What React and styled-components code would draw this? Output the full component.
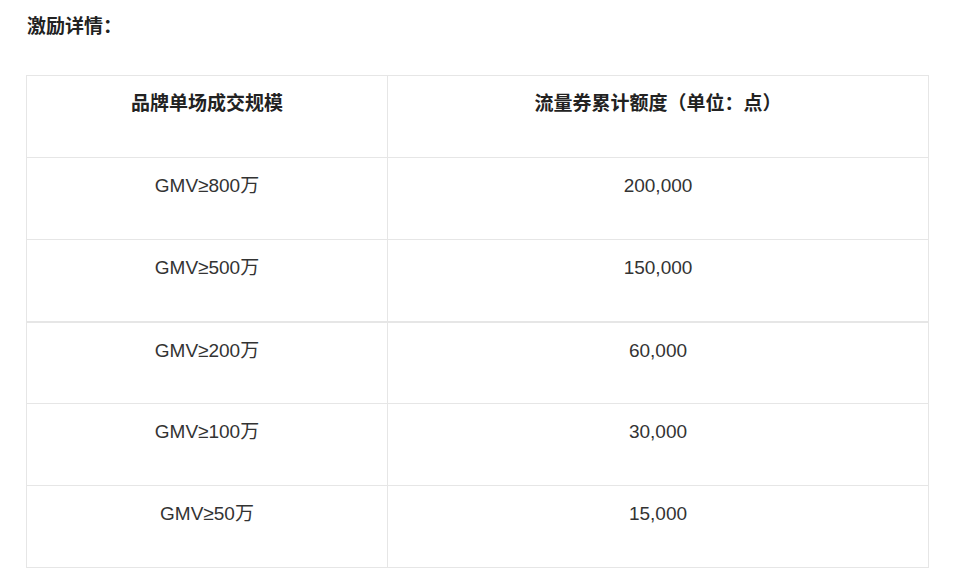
import React from 'react';
import styled, { createGlobalStyle } from 'styled-components';

const GlobalStyle = createGlobalStyle`
    html, body {
        margin: 0;
        padding: 0;
        background: #fff;
    }
    body {
        font-family: "Liberation Sans", Arial, "Noto Sans CJK SC", sans-serif;
        color: #333;
    }
`;

const Page = styled.div`
    padding: 15px 38px 0 26px;
`;

const Title = styled.div`
    font-size: 19px;
    line-height: 24px;
    font-weight: bold;
    color: #222;
    padding-left: 1px;
    margin-bottom: 36px;
`;

const Table = styled.table`
    width: 903px;
    border-collapse: collapse;
    table-layout: fixed;
    border: 1px solid #e6e6e6;
`;

const Row = styled.tr`
    border-top: ${p => p.thick ? '2px' : '1px'} solid #e6e6e6;
`;

const Cell = styled.td`
    height: 82px;
    box-sizing: border-box;
    padding: 16px 8px 0;
    vertical-align: top;
    text-align: center;
    font-size: 19px;
    line-height: 24px;
    border-right: 1px solid #e6e6e6;
    font-weight: ${p => p.head ? 'bold' : 'normal'};
    color: ${p => p.head ? '#222' : '#333'};
    &:last-child {
        border-right: none;
    }
`;

const rows = [
    ['GMV≥800万', '200,000'],
    ['GMV≥500万', '150,000'],
    ['GMV≥200万', '60,000'],
    ['GMV≥100万', '30,000'],
    ['GMV≥50万', '15,000'],
];

export default function App() {
    return (
        <>
            <GlobalStyle />
            <Page>
                <Title>激励详情：</Title>
                <Table>
                    <colgroup>
                        <col style={{ width: '361px' }} />
                        <col />
                    </colgroup>
                    <tbody>
                        <Row>
                            <Cell head>品牌单场成交规模</Cell>
                            <Cell head>流量券累计额度（单位：点）</Cell>
                        </Row>
                        {rows.map((r, i) => (
                            <Row key={i} thick={i === 2}>
                                <Cell>{r[0]}</Cell>
                                <Cell>{r[1]}</Cell>
                            </Row>
                        ))}
                    </tbody>
                </Table>
            </Page>
        </>
    );
}
